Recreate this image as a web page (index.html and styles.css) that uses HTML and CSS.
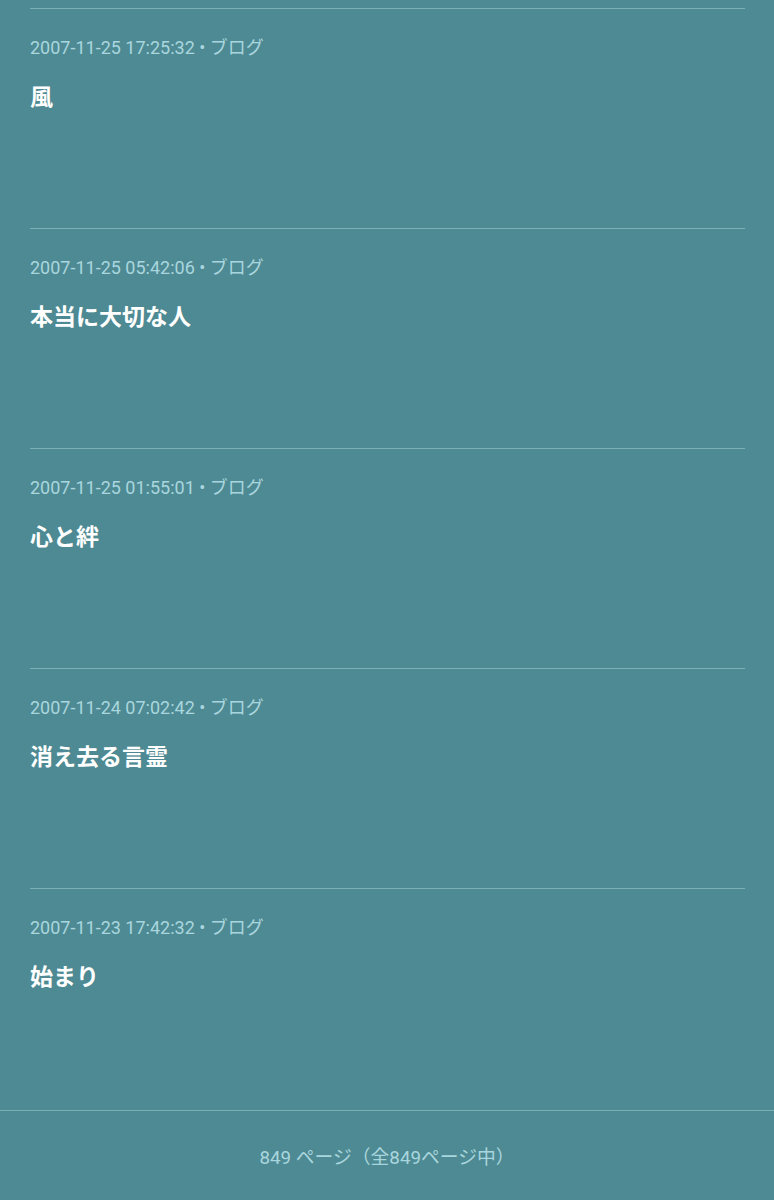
FILE: index.html
```html
<!DOCTYPE html>
<html lang="ja">
<head>
<meta charset="utf-8">
<link rel="stylesheet" href="styles.css">
</head>
<body>
<main class="list">
  <article class="post">
    <div class="meta">2007-11-25 17:25:32 • ブログ</div>
    <h2 class="title">風</h2>
  </article>
  <article class="post">
    <div class="meta">2007-11-25 05:42:06 • ブログ</div>
    <h2 class="title">本当に大切な人</h2>
  </article>
  <article class="post">
    <div class="meta">2007-11-25 01:55:01 • ブログ</div>
    <h2 class="title">心と絆</h2>
  </article>
  <article class="post">
    <div class="meta">2007-11-24 07:02:42 • ブログ</div>
    <h2 class="title">消え去る言霊</h2>
  </article>
  <article class="post">
    <div class="meta">2007-11-23 17:42:32 • ブログ</div>
    <h2 class="title">始まり</h2>
  </article>
</main>
<footer class="pager">849 ページ（全849ページ中）</footer>
</body>
</html>
```
FILE: styles.css
```css
html, body {
  margin: 0;
  padding: 0;
  background: #4e8a93;
  font-family: Roboto, "Noto Sans CJK JP", sans-serif;
}
.list {
  padding: 8px 29px 0 30px;
}
.post {
  box-sizing: border-box;
  height: 220px;
  border-top: 1px solid #7bafb6;
  padding-top: 27px;
}
.meta {
  color: #a9d6de;
  font-size: 18px;
  line-height: 24px;
}
.title {
  margin: 23px 0 0;
  color: #ffffff;
  font-size: 23px;
  font-weight: 700;
  line-height: 30px;
}
.pager {
  margin-top: 2px;
  border-top: 1px solid #7bafb6;
  height: 89px;
  display: flex;
  align-items: center;
  justify-content: center;
  color: #a9d6de;
  font-size: 18.8px;
}
```
